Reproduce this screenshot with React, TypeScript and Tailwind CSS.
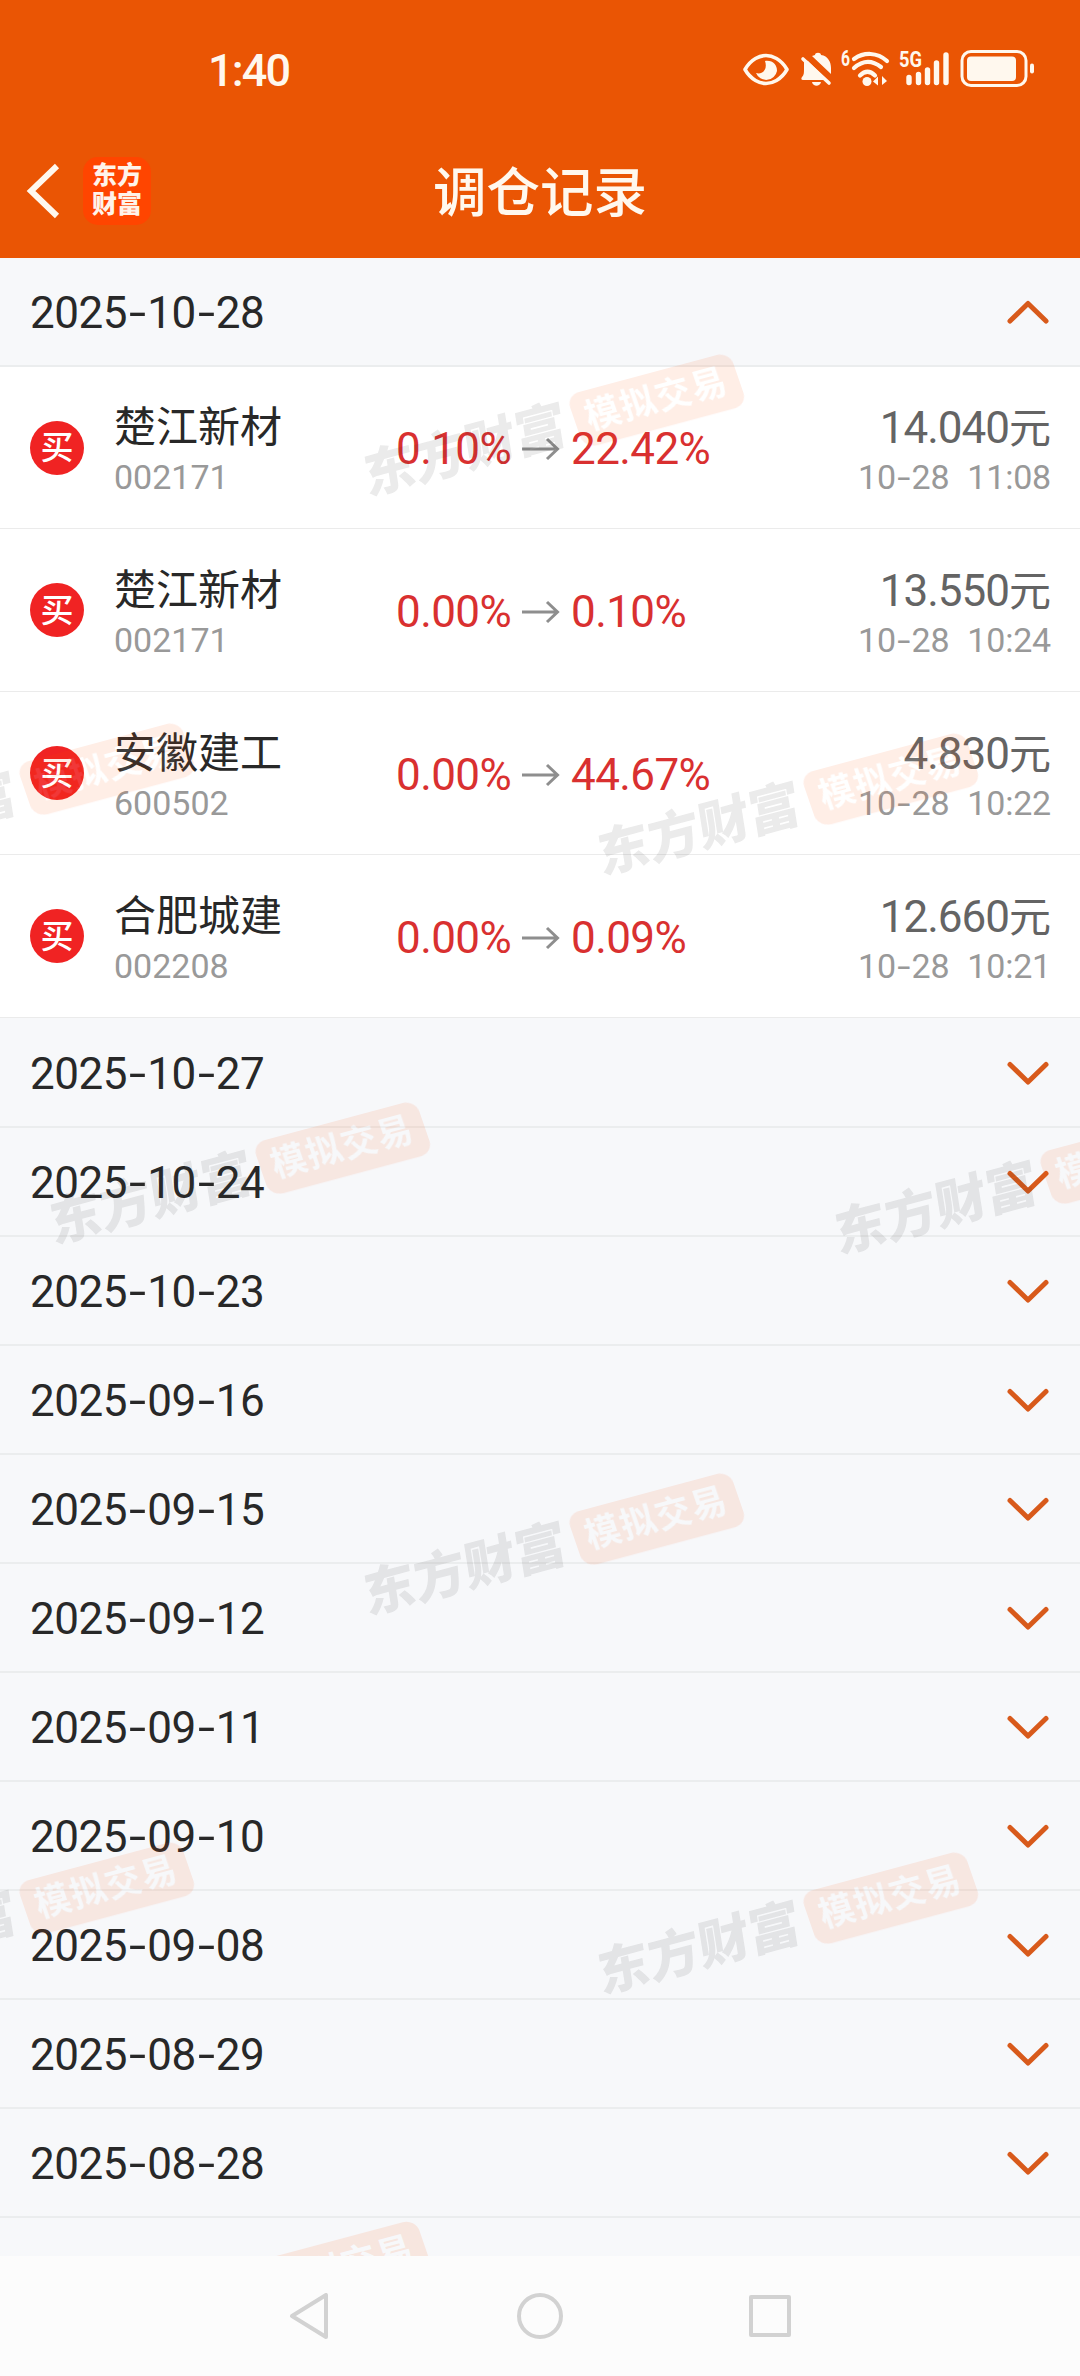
import React from 'react';

interface Trade {
    name: string;
    code: string;
    from: string;
    to: string;
    price: string;
    day: string;
    time: string;
}

const trades: Trade[] = [
    { name: '楚江新材', code: '002171', from: '0.10%', to: '22.42%', price: '14.040', day: '10-28', time: '11:08' },
    { name: '楚江新材', code: '002171', from: '0.00%', to: '0.10%', price: '13.550', day: '10-28', time: '10:24' },
    { name: '安徽建工', code: '600502', from: '0.00%', to: '44.67%', price: '4.830', day: '10-28', time: '10:22' },
    { name: '合肥城建', code: '002208', from: '0.00%', to: '0.09%', price: '12.660', day: '10-28', time: '10:21' },
];

const dates = [
    '2025-10-27',
    '2025-10-24',
    '2025-10-23',
    '2025-09-16',
    '2025-09-15',
    '2025-09-12',
    '2025-09-11',
    '2025-09-10',
    '2025-09-08',
    '2025-08-29',
    '2025-08-28',
];

const watermarks = [
    'left-[358px] top-[95px]',
    'left-[-192px] top-[464px]',
    'left-[592px] top-[474px]',
    'left-[44px] top-[843px]',
    'left-[829px] top-[853px]',
    'left-[358px] top-[1214px]',
    'left-[-192px] top-[1583px]',
    'left-[592px] top-[1593px]',
    'left-[44px] top-[1962px]',
];

// Hyphens sit in a wider box than the font gives them
const Dashed: React.FC<{ text: string }> = ({ text }) => (
    <>
        {text.split('-').map((part, i) => (
            <React.Fragment key={i}>
                {i > 0 && <span className="inline-block w-[0.46em] scale-x-140 text-center">-</span>}
                {part}
            </React.Fragment>
        ))}
    </>
);

const Chevron: React.FC<{ open?: boolean }> = ({ open }) => (
    <svg className="mt-[2px] h-[28px] w-[46px]" viewBox="0 0 46 28" fill="none" stroke="#d85a1b" strokeWidth="5" strokeLinecap="round" strokeLinejoin="round">
        <path d={open ? 'M5 22 23 4.500l18 17.500' : 'M5 4.500l18 17.500L41 4.500'} />
    </svg>
);

const StatusBar: React.FC = () => (
    <div className="flex h-[136px] items-center justify-between pt-[3px] pr-[45px] pl-[208px] text-[#fff8ee]">
        <span className="pt-[3px] text-[45px] font-medium tracking-[-1.8px]">1:40</span>
        <svg className="h-[80px] w-[294px]" viewBox="0 0 294 80" fill="none" stroke="currentColor" strokeLinecap="round">
            {/* eye */}
            <path d="M4 39.500C10 29 19 25.500 25 25.500S40 29 46 39.500C40 50 31 53.500 25 53.500S10 50 4 39.500Z" strokeWidth="3.600" strokeLinejoin="round" />
            <path d="M24 31c8-1 12 4 12 10a11 11 0 0 1-21 2c6 2 12-3 9-12Z" fill="currentColor" stroke="none" />
            {/* muted bell */}
            <path d="M63 30 67 31 86 50H62c-2 0-2-2-1-3 2-2 2-4 2-9ZM71 26l3-1c0-3 6-3 6 0 7 1 10 7 10 13v6ZM71 52h9c-1 5-8 5-9 0Z" fill="currentColor" stroke="none" />
            <path d="M62 29 88 53" strokeWidth="3.600" />
            {/* wifi */}
            <path d="M113 29c10-7 23-7 33 2M113 38c9-8 18-8 27-1M119 45.500c5-5 10-5 15 0" strokeWidth="4.200" />
            <circle cx="126" cy="51.500" r="4.500" fill="currentColor" stroke="none" />
            <path d="M132 51.500l5-5v9ZM146 51l-5-5v9Z" fill="currentColor" stroke="none" />
            <text x="100" y="36" fill="currentColor" stroke="none" fontFamily="Roboto" fontSize="22" fontWeight="700" textLength="9" lengthAdjust="spacingAndGlyphs">6</text>
            {/* signal */}
            <text x="158" y="37" fill="currentColor" stroke="none" fontFamily="Roboto" fontSize="22" fontWeight="700" textLength="23" lengthAdjust="spacingAndGlyphs">5G</text>
            <path d="M168 47.500v5M177.500 44.500v8M186.500 40v12.500M195.500 33v19.500M205 25v27.500" strokeWidth="5.400" />
            {/* battery */}
            <rect x="221" y="21.500" width="64" height="34" rx="9" strokeWidth="3" />
            <rect x="226" y="26.500" width="49" height="24.500" rx="4" fill="currentColor" stroke="none" />
            <path d="M291 35.500v6" strokeWidth="4" />
        </svg>
    </div>
);

const TitleBar: React.FC = () => (
    <div className="grid h-[122px] grid-cols-3 items-center">
        <div className="flex items-center pb-[12px] pl-[26px]">
            <svg className="h-[56px] w-[34px]" viewBox="0 0 34 56" fill="none" stroke="#fff8ee" strokeWidth="6">
                <path d="M31 3 5 28l26 25" />
            </svg>
            <div className="ml-[23px] flex size-[68px] flex-col items-center justify-center rounded-[15px] bg-[#ff4500] pb-[2px] text-[25px] leading-[29px] font-black text-[#fff3ea]">
                <span>东方</span>
                <span>财富</span>
            </div>
        </div>
        <h1 className="pb-[6px] text-center text-[53.500px] leading-none font-medium text-[#fff8ee]">调仓记录</h1>
    </div>
);

const TradeRow: React.FC<{ trade: Trade }> = ({ trade }) => (
    <li className="flex h-[163px] items-center border-b border-[#ebebeb] bg-white pr-[29px] pl-[30px] first:h-[162px]">
        <div className="flex size-[54px] items-center justify-center rounded-full bg-[#f02323] text-[33px] leading-none font-medium text-white">买</div>
        <div className="ml-[30px] w-[282px] pt-[5px]">
            <div className="text-[42px] leading-[54px] text-[#282828]">{trade.name}</div>
            <div className="text-[34px] leading-[44px] text-[#999]">{trade.code}</div>
        </div>
        <div className="flex flex-1 items-center pt-[3px] text-[44px] tracking-[-0.6px] text-[#d93030]">
            <span className="w-[126px]">{trade.from}</span>
            <svg className="mr-[11px] h-[24px] w-[38px]" viewBox="0 0 38 24" fill="none" stroke="#8e8e8e" strokeWidth="3">
                <path d="M0 12h35M25 2l10.500 10L25 22" />
            </svg>
            <span>{trade.to}</span>
        </div>
        <div className="pt-[5px] text-right">
            <div className="text-[44px] leading-[54px] tracking-[-1px] text-[#646464]">
                {trade.price}
                <span className="text-[42px] tracking-normal">元</span>
            </div>
            <div className="text-[34px] leading-[43px] tracking-[-0.2px] text-[#999]">
                <Dashed text={trade.day} />
                <span className="ml-[18px]">{trade.time}</span>
            </div>
        </div>
    </li>
);

const DateHeader: React.FC<{ date: string; open?: boolean }> = ({ date, open }) => (
    <div className="flex h-[109px] items-center justify-between border-b-2 border-[#ebedee] bg-[#f7f8fa] pr-[29px] pl-[30px]">
        <span className="pt-[3px] text-[44px] tracking-[-0.5px] text-[#282828]">
            <Dashed text={date} />
        </span>
        <Chevron open={open} />
    </div>
);

const Watermark: React.FC<{ position: string }> = ({ position }) => (
    <div className={`absolute h-[150px] w-[390px] opacity-10 ${position}`}>
        <div className="flex h-full -rotate-15 items-center whitespace-nowrap">
            <span className="-skew-x-6 text-[52px] leading-none font-black text-[#323232]">东方财富</span>
            <span className="ml-[10px] flex h-[56px] w-[169px] skew-x-4 items-center justify-center rounded-[13px] bg-[#ff5000] text-[35px] font-bold tracking-[1.500px] text-white">
                模拟交易
            </span>
        </div>
    </div>
);

const NavBar: React.FC = () => (
    <nav className="flex h-[120px] items-center justify-center gap-[184px] bg-[#fcfcfc]">
        <svg className="size-[46px]" viewBox="0 0 46 46" fill="none" stroke="#d2d2d2" strokeWidth="4" strokeLinejoin="round">
            <path d="M39 2v42L5 23Z" />
        </svg>
        <svg className="size-[46px]" viewBox="0 0 46 46" fill="none" stroke="#d2d2d2" strokeWidth="4">
            <circle cx="23" cy="23" r="21" />
        </svg>
        <svg className="size-[46px]" viewBox="0 0 46 46" fill="none" stroke="#d2d2d2" strokeWidth="4" strokeLinejoin="round">
            <path d="M4 4h38v38H4Z" />
        </svg>
    </nav>
);

export default function App() {
    return (
        <div className="flex h-[2376px] w-[1080px] flex-col overflow-hidden bg-[#f7f8fa] font-[Roboto,'Noto_Sans_CJK_SC',sans-serif]">
            <header className="bg-[#ea5504]">
                <StatusBar />
                <TitleBar />
            </header>
            <main className="relative flex-1 overflow-hidden">
                <DateHeader date="2025-10-28" open />
                <ul>
                    {trades.map((trade, i) => (
                        <TradeRow key={i} trade={trade} />
                    ))}
                </ul>
                <div className="pt-px">
                    {dates.map(date => (
                        <DateHeader key={date} date={date} />
                    ))}
                </div>
                {watermarks.map(position => (
                    <Watermark key={position} position={position} />
                ))}
            </main>
            <NavBar />
        </div>
    );
}
